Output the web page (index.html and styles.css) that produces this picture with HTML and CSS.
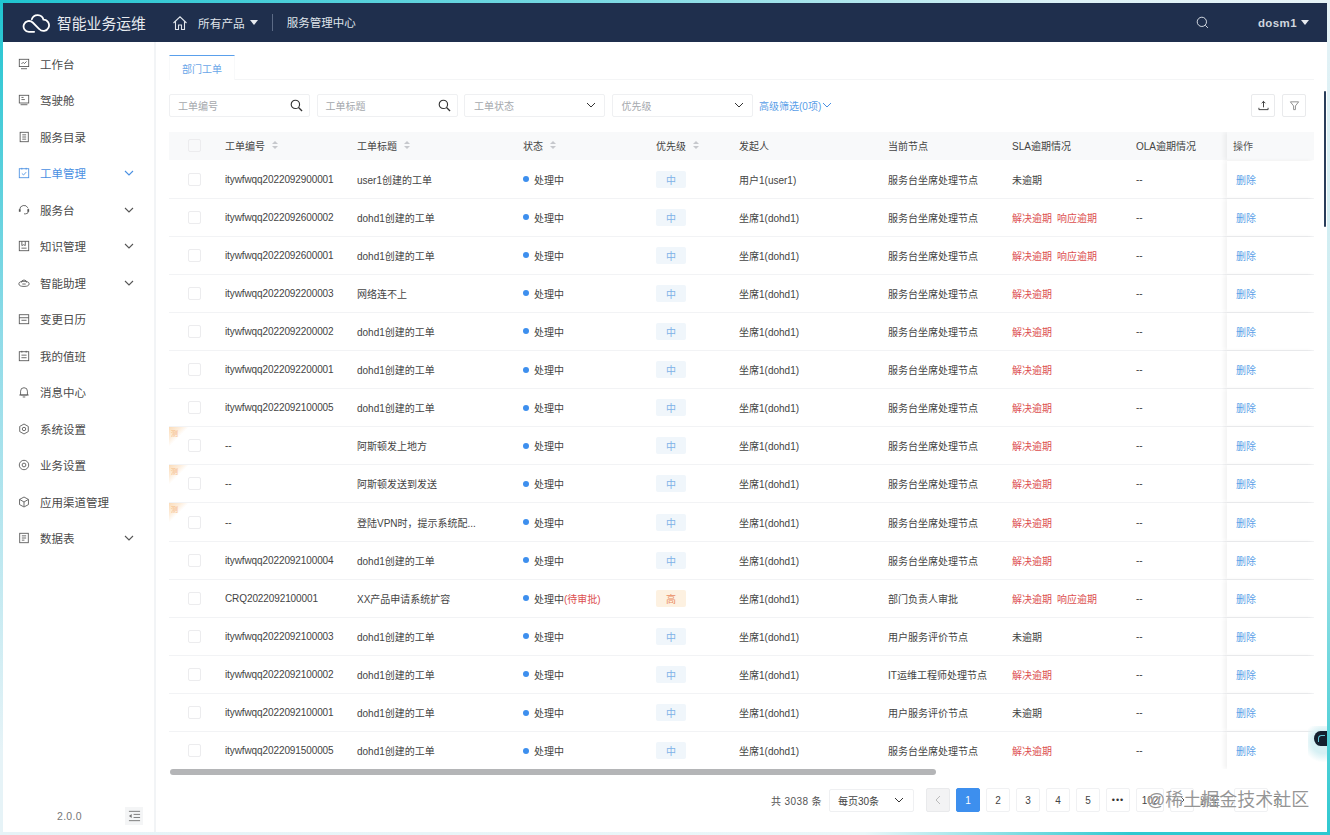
FILE: index.html
```html
<!DOCTYPE html>
<html lang="zh-CN">
<head>
<meta charset="utf-8">
<title>智能业务运维</title>
<link rel="stylesheet" href="styles.css">
</head>
<body>
<div class="frame">
<div class="app">
<header class="topbar">
  <div class="brand">
    <svg class="logo" viewBox="0 0 30 22"><path d="M10.500 7.500A6.500 6.500 0 0 1 23 8A6 6 0 1 1 18.500 18L11.500 11A5.800 5.800 0 1 0 7.500 21H13" fill="none" stroke="#fff" stroke-width="1.900" stroke-linecap="round"/></svg>
    <span class="brand-name">智能业务运维</span>
  </div>
  <svg class="home" viewBox="0 0 16 16"><path d="M1.500 8 8 1.800 14.500 8M3.500 6.500V14.500H6.500V10H9.500V14.500H12.500V6.500" fill="none" stroke="#dfe4ea" stroke-width="1.100"/></svg>
  <span class="nav-text">所有产品</span>
  <span class="caret"></span>
  <span class="nav-sep"></span>
  <span class="nav-text nav-center">服务管理中心</span>
  <span class="spacer"></span>
  <svg class="top-search" viewBox="0 0 14 14"><circle cx="6.300" cy="6.300" r="5" fill="none" stroke="#dfe4ea" stroke-width="1"/><path d="M10 10l2.800 2.800" stroke="#dfe4ea" stroke-width="1"/></svg>
  <span class="user">dosm1</span>
  <span class="caret user-caret"></span>
</header>
<div class="body">
<aside class="side">
  <nav class="menu" id="menu"></nav>
  <div class="side-foot">
    <span class="version">2.0.0</span>
    <span class="collapse"><svg viewBox="0 0 14 12"><path d="M1 1h12M6 4.300h7M6 7.600h7M1 11h12" stroke="#777" stroke-width="1" fill="none"/><path d="M4 3.800 1 6l3 2.200z" fill="#777"/></svg></span>
  </div>
</aside>
<main class="main">
  <div class="tabs"><span class="tab">部门工单</span></div>
  <div class="filters">
    <div class="field f-search"><span>工单编号</span><svg viewBox="0 0 14 14"><circle cx="5.800" cy="5.800" r="4.500" fill="none" stroke="#333" stroke-width="1.200"/><path d="M9.200 9.200l3.800 3.800" stroke="#333" stroke-width="1.400"/></svg></div>
    <div class="field f-search"><span>工单标题</span><svg viewBox="0 0 14 14"><circle cx="5.800" cy="5.800" r="4.500" fill="none" stroke="#333" stroke-width="1.200"/><path d="M9.200 9.200l3.800 3.800" stroke="#333" stroke-width="1.400"/></svg></div>
    <div class="field f-select"><span>工单状态</span><svg viewBox="0 0 10 6"><path d="M1 1l4 4 4-4" fill="none" stroke="#333" stroke-width="1"/></svg></div>
    <div class="field f-select"><span>优先级</span><svg viewBox="0 0 10 6"><path d="M1 1l4 4 4-4" fill="none" stroke="#333" stroke-width="1"/></svg></div>
    <span class="adv">高级筛选(0项)<svg viewBox="0 0 10 6"><path d="M1 1l4 4 4-4" fill="none" stroke="#4a90e2" stroke-width="1"/></svg></span>
    <span class="spacer"></span>
    <span class="tool"><svg viewBox="0 0 12 12"><path d="M6 8V1.500M4 3.500l2-2 2 2M1 8.500v2h10v-2" fill="none" stroke="#333" stroke-width="1"/></svg></span>
    <span class="tool"><svg viewBox="0 0 12 12"><path d="M1.500 2h9L7 6.500V10.500H5V6.500z" fill="none" stroke="#888" stroke-width="1"/></svg></span>
  </div>
  <div class="table-wrap">
    <div class="thead row" id="thead"></div>
    <div class="tbody" id="tbody"></div>
    <div class="scroll-track"><div class="scroll-thumb"></div></div>
  </div>
  <div class="pager">
    <span class="total">共 3038 条</span>
    <span class="size">每页30条<svg viewBox="0 0 10 6"><path d="M1 1l4 4 4-4" fill="none" stroke="#333" stroke-width="1"/></svg></span>
    <span class="pg prev"><svg viewBox="0 0 6 10"><path d="M5 1 1 5l4 4" fill="none" stroke="#bbb" stroke-width="1"/></svg></span>
    <span class="pg on">1</span><span class="pg">2</span><span class="pg">3</span><span class="pg">4</span><span class="pg">5</span><span class="pg dots">•••</span><span class="pg wide">102</span>
    <span class="pg"><svg viewBox="0 0 6 10"><path d="M1 1l4 4-4 4" fill="none" stroke="#555" stroke-width="1"/></svg></span>
    <span class="jump">跳至</span>
    <span class="jump-box"></span>
    <span class="jump-unit">页</span>
  </div>
</main>
</div>
</div>
<span class="rail"></span>
<span class="bot"><span class="bot-in"></span></span>
<span class="watermark">@稀土掘金技术社区</span>
</div>
<script src="app.js"></script>
</body>
</html>
```
FILE: app.js
```js
var I = {
  desk: '<rect x="1.500" y="1.500" width="11" height="8.500" fill="none"/><path d="M3.500 12.500h7M4 7l2-2 1.500 1.500L10 4" fill="none"/>',
  cock: '<rect x="1.500" y="1.500" width="11" height="9" fill="none"/><path d="M3 12.500h8M4 4h2.500M4 6.500h4" fill="none"/>',
  cat: '<rect x="2.500" y="1.500" width="9.500" height="11" fill="none"/><path d="M5 4.500h4.500M5 7h4.500M5 9.500h4.500" fill="none"/>',
  order: '<rect x="1.500" y="2" width="11" height="10.500" fill="none"/><path d="M4.500 1v2M9.500 1v2M4.500 7.500l2 1.800 3-3.300" fill="none"/>',
  head: '<path d="M2 8.500V6.500a5 5 0 0 1 9.500-2M12 5.500v3a3 3 0 0 1-3 3H7" fill="none"/><path d="M2 6v3M12 6v3" stroke-width="2"/>',
  know: '<rect x="1.500" y="1.500" width="11" height="11" fill="none"/><path d="M4.500 1.500v5l2-1 2 1v-5M4 9.500h6" fill="none"/>',
  bot: '<ellipse cx="7" cy="8" rx="6" ry="3" fill="none"/><path d="M4 6.500a3 3 0 0 1 6 0M5 8.200h4" fill="none"/>',
  cal: '<rect x="1.500" y="2" width="11" height="10.500" fill="none"/><path d="M1.500 5.500h11M4 8.500h6" fill="none"/>',
  duty: '<rect x="1.500" y="2" width="11" height="10.500" fill="none"/><path d="M4.500 1v2M9.500 1v2M4 6h6M4 9h6" fill="none"/>',
  bell: '<path d="M3 10.500V6a4 4 0 0 1 8 0v4.500zM1.500 10.500h11M5.500 12.800h3" fill="none"/>',
  gear: '<path d="M7 1.200 12 4v6l-5 2.800L2 10V4z" fill="none"/><circle cx="7" cy="7" r="2" fill="none"/>',
  ring: '<circle cx="7" cy="7" r="5.500" fill="none"/><circle cx="7" cy="7" r="2.200" fill="none"/>',
  box: '<path d="M7 1.200 12.200 4v6L7 12.800 1.800 10V4z" fill="none"/><path d="M2 4l5 3 5-3M7 7v5" fill="none"/>',
  data: '<rect x="2" y="1.500" width="10" height="11" fill="none"/><path d="M4.500 4.500h5M4.500 7h5M4.500 9.500h3" fill="none"/>'
};
var menu = [
  ['desk','工作台'],['cock','驾驶舱'],['cat','服务目录'],['order','工单管理',1,1],['head','服务台',1],
  ['know','知识管理',1],['bot','智能助理',1],['cal','变更日历'],['duty','我的值班'],['bell','消息中心'],
  ['gear','系统设置'],['ring','业务设置'],['box','应用渠道管理'],['data','数据表',1]
];
document.getElementById('menu').innerHTML = menu.map(function (m) {
  return '<a class="item' + (m[3] ? ' active' : '') + '"><svg class="ico" viewBox="0 0 14 14">' + I[m[0]] + '</svg><span class="label">' + m[1] + '</span>' +
    (m[2] ? '<svg class="chev" viewBox="0 0 10 6"><path d="M1 1l4 4 4-4" fill="none"/></svg>' : '') + '</a>';
}).join('');

var sort = '<span class="sort"><i class="up"></i><i class="down"></i></span>';
var heads = [['工单编号',1],['工单标题',1],['状态',1],['优先级',1],['发起人'],['当前节点'],['SLA逾期情况'],['OLA逾期情况']];
document.getElementById('thead').innerHTML = '<div class="cell"><span class="check"></span></div>' +
  heads.map(function (h) { return '<div class="cell">' + h[0] + (h[1] ? sort : '') + '</div>'; }).join('') +
  '<div class="cell op op-head">操作</div>';

var A = '服务台坐席处理节点', W = 'dohd1创建的工单', P = '坐席1(dohd1)', J = '解决逾期', R = '解决逾期<span class="gap">响应逾期</span>', N = '未逾期';
var rows = [
  ['itywfwqq2022092900001','user1创建的工单','','中','用户1(user1)',A,N],
  ['itywfwqq2022092600002',W,'','中',P,A,R],
  ['itywfwqq2022092600001',W,'','中',P,A,R],
  ['itywfwqq2022092200003','网络连不上','','中',P,A,J],
  ['itywfwqq2022092200002',W,'','中',P,A,J],
  ['itywfwqq2022092200001',W,'','中',P,A,J],
  ['itywfwqq2022092100005',W,'','中',P,A,J],
  ['--','阿斯顿发上地方','','中',P,A,J,1],
  ['--','阿斯顿发送到发送','','中',P,A,J,1],
  ['--','登陆VPN时，提示系统配...','','中',P,A,J,1],
  ['itywfwqq2022092100004',W,'','中',P,A,J],
  ['CRQ2022092100001','XX产品申请系统扩容','(待审批)','高',P,'部门负责人审批',R],
  ['itywfwqq2022092100003',W,'','中',P,'用户服务评价节点',N],
  ['itywfwqq2022092100002',W,'','中',P,'IT运维工程师处理节点',J],
  ['itywfwqq2022092100001',W,'','中',P,'用户服务评价节点',N],
  ['itywfwqq2022091500005',W,'','中',P,A,J]
];
document.getElementById('tbody').innerHTML = rows.map(function (r) {
  return '<div class="row tr">' +
    (r[7] ? '<span class="corner"><span>测</span></span>' : '') +
    '<div class="cell"><span class="check"></span></div>' +
    '<div class="cell id">' + r[0] + '</div>' +
    '<div class="cell">' + r[1] + '</div>' +
    '<div class="cell"><span class="dot"></span>处理中' + (r[2] ? '<span class="red">' + r[2] + '</span>' : '') + '</div>' +
    '<div class="cell"><span class="tag' + (r[3] === '高' ? ' high' : '') + '">' + r[3] + '</span></div>' +
    '<div class="cell">' + r[4] + '</div>' +
    '<div class="cell">' + r[5] + '</div>' +
    '<div class="cell' + (r[6] === N ? '' : ' red') + '">' + r[6] + '</div>' +
    '<div class="cell">--</div>' +
    '<div class="cell op"><span class="link">删除</span></div>' +
    '</div>';
}).join('');
```
FILE: styles.css
```css
* { box-sizing: border-box; }
html, body { margin: 0; height: 100%; overflow: hidden; }
body { font-family: "Liberation Sans", "Noto Sans CJK SC", sans-serif; font-size: 10px; color: #444; }
.frame {
  position: relative; width: 1330px; height: 835px; padding: 3px;
  background:
    linear-gradient(90deg, #1fc4d0, #7ad9e3 45%, #dcf1f6 80%, #e6f3f7) top / 100% 3px no-repeat,
    linear-gradient(90deg, #e6f3f7, #eaf7f9 65%, #2ec8d0 85%) bottom / 100% 3px no-repeat,
    linear-gradient(180deg, #1fc4d0, #8fdbe8 40%, #e6f3f7 90%) left / 3px 100% no-repeat,
    linear-gradient(180deg, #e6f3f7, #bfe9ee 55%, #2ec8d0) right / 3px 100% no-repeat,
    #fff;
}
.app { width: 100%; height: 100%; background: #fff; display: flex; flex-direction: column; overflow: hidden; }

.topbar { height: 39px; flex: none; background: #1f2f4d; color: #dfe4ea; display: flex; align-items: center; padding-left: 19px; }
.brand { width: 150px; display: flex; align-items: center; gap: 7px; }
.logo { width: 28px; height: 21px; flex: none; }
.brand-name { font-size: 14.800px; color: #e8ebf0; }
.home { width: 16px; height: 16px; margin-right: 10px; flex: none; }
.nav-text { font-size: 11.700px; position: relative; top: -.5px; }
.nav-center { font-size: 11.500px; margin-left: 1px; }
.caret { width: 0; height: 0; border: 4.500px solid transparent; border-top: 5px solid #e8ebf0; border-bottom: 0; margin-left: 5px; }
.nav-sep { width: 1px; height: 17px; background: #5b6a85; margin: 0 13px 0 14px; }
.spacer { flex: 1; }
.top-search { width: 13px; height: 13px; margin-right: 49px; }
.user { font-size: 11.500px; font-weight: 700; letter-spacing: .4px; color: #cfd5de; }
.user-caret { margin-left: 3.500px; margin-right: 18.500px; }

.body { flex: 1; display: flex; min-height: 0; }
.side { width: 153px; flex: none; border-right: 2px solid #f2f4f6; display: flex; flex-direction: column; }
.menu { flex: 1; padding-top: 3.500px; }
.item { height: 36.500px; display: flex; align-items: center; padding: 0 20px 0 15px; font-size: 11.500px; color: #4a4a4a; }
.ico { width: 12px; height: 12px; margin-right: 10px; stroke: #555; stroke-width: 1; flex: none; }
.label { flex: none; }
.chev { width: 10px; height: 6px; stroke: #555; stroke-width: 1.100; margin-left: auto; flex: none; }
.item.active { color: #4a90e2; }
.item.active .ico, .item.active .chev { stroke: #4a90e2; }
.side-foot { height: 32px; display: flex; align-items: center; padding: 0 11px 0 54px; justify-content: space-between; }
.version { font-size: 10.500px; color: #777; letter-spacing: .3px; }
.collapse { width: 18px; height: 18px; background: #f4f5f6; display: flex; align-items: center; justify-content: center; }
.collapse svg { width: 13px; height: 12px; }

.main { flex: 1; min-width: 0; padding: 13px 13px 0 13px; display: flex; flex-direction: column; }
.tabs { height: 25px; flex: none; border-bottom: 1px solid #f4f5f6; }
.tab { display: block; width: 66px; height: 25px; text-align: center; line-height: 27px; color: #6aa6e8; border-top: 1px solid #5aa0ec; border-left: 1px solid #f8f9fa; border-right: 1px solid #f8f9fa; background: #fff; }
.filters { height: 24px; margin-top: 13px; display: flex; align-items: center; flex: none; padding-right: 8px; }
.field { height: 23px; border: 1px solid #eff0f2; border-radius: 2px; display: flex; align-items: center; justify-content: space-between; color: #a5a8ad; padding: 0 6px 0 8px; margin-right: 6.500px; flex: none; }
.f-search { width: 141px; }
.f-search svg { width: 13px; height: 13px; }
.f-select { width: 141px; padding-left: 9px; padding-right: 8px; }
.f-select svg { width: 10px; height: 6px; }
.adv { color: #5a9ee8; display: flex; align-items: center; }
.adv svg { width: 10px; height: 6px; margin-left: 1px; }
.tool { width: 24px; height: 23px; border: 1px solid #e9eaec; border-radius: 2px; display: flex; align-items: center; justify-content: center; margin-left: 7px; }
.tool svg { width: 11px; height: 11px; }

.table-wrap { position: relative; margin-top: 14.500px; flex: none; height: 644.500px; overflow: hidden; }
.row { display: grid; grid-template-columns: 56px 132px 166px 133px 83px 149px 124px 124px 91px 87px; align-items: center; position: relative; }
.thead { height: 28px; background: #f8f9fa; color: #555; }
.tr { height: 38.120px; border-bottom: 1px solid #f2f3f5; }
.tbody { padding-top: 1px; }
.cell { white-space: nowrap; display: flex; align-items: center; min-width: 0; color: #444; }
.cell.id { letter-spacing: -.1px; }
.cell.red, .red { color: #dc4f4f; }
.gap { margin-left: 5px; }
.check { width: 13px; height: 13px; border: 1px solid #ececee; border-radius: 2px; margin-left: 19px; background: #fff; }
.thead .check { background: #f8f9fa; }
.sort { display: inline-flex; flex-direction: column; gap: 2px; margin-left: 7px; position: relative; top: -1px; }
.sort i { width: 0; height: 0; border: 3.500px solid transparent; }
.sort .up { border-bottom: 3.500px solid #c6c8cc; border-top: 0; }
.sort .down { border-top: 3.500px solid #c6c8cc; border-bottom: 0; }
.dot { width: 6px; height: 6px; border-radius: 50%; background: #3d8fee; margin-right: 5px; }
.tag { width: 30px; height: 17px; background: #f0f6fb; color: #7fb2e8; display: flex; align-items: center; justify-content: center; border-radius: 2px; }
.tag.high { background: #fdf1e1; color: #ea8d63; }
.op { position: relative; height: 100%; padding-left: 9px; background: #fff; box-shadow: -3px 0 4px rgba(0,0,0,.05); }
.op-head { padding-left: 6px; background: #f8f9fa; color: #555; }
.link { color: #5a9fe8; }
.corner { position: absolute; left: 0; top: 0; width: 20px; height: 20px; background: linear-gradient(135deg, #fbdcb8 0, #fdeedd 30%, transparent 50%); color: #f5b77b; font-size: 7px; }
.corner span { position: absolute; left: 2px; top: 1px; }
.scroll-track { position: absolute; left: 0; bottom: 0; right: 0; height: 7px; background: #fff; }
.scroll-thumb { width: 766px; height: 6px; margin-left: 1px; background: #b4b5b7; border-radius: 3px; }

.pager { display: flex; align-items: center; justify-content: flex-end; margin-top: 12px; height: 24px; padding-right: 31px; }
.total { color: #555; margin-right: 7px; letter-spacing: .4px; }
.size { width: 85px; height: 23px; border: 1px solid #eff0f2; border-radius: 2px; display: flex; align-items: center; justify-content: space-between; padding: 0 9px 0 8px; margin-right: 12px; color: #444; }
.size svg { width: 10px; height: 6px; }
.pg { width: 24px; height: 24px; border: 1px solid #f0f1f3; border-radius: 2px; display: flex; align-items: center; justify-content: center; margin-right: 6px; color: #444; }
.pg svg { width: 6px; height: 10px; }
.pg.prev { background: #f3f3f4; border-color: #e9eaec; }
.pg.on { background: #3d8fee; border-color: #3d8fee; color: #fff; }
.pg.dots { font-size: 9px; letter-spacing: 1px; color: #333; }
.pg.wide { width: 28px; }
.jump { color: #555; margin-right: 14px; }
.jump-box { width: 34px; height: 24px; border: 1px solid #f0f1f3; border-radius: 2px; }
.jump-unit { color: #555; margin-left: 5px; }

.rail { position: absolute; left: 1324px; top: 91px; width: 2px; height: 136px; background: #2a3d5a; border-radius: 1px; }
.bot { position: absolute; left: 1308px; top: 726px; width: 19px; height: 40px; display: flex; padding-top: 5px; justify-content: flex-end; background: radial-gradient(circle at 80% 40%, #d6f0f4 0 40%, transparent 72%); }
.bot-in { position: relative; width: 13px; height: 15px; border-radius: 50% 0 0 50%; background: #15202f; }
.bot-in::after { content: ""; position: absolute; left: 4px; top: 4px; width: 6px; height: 6px; border-top: 1px solid #5fc6d6; border-left: 1px solid #5fc6d6; border-radius: 50% 0 0 0; }
.watermark { position: absolute; left: 1147px; top: 789px; font-size: 18px; line-height: 22px; color: rgba(120,120,120,.78); text-shadow: 0 0 1px #fff; white-space: nowrap; }
```
